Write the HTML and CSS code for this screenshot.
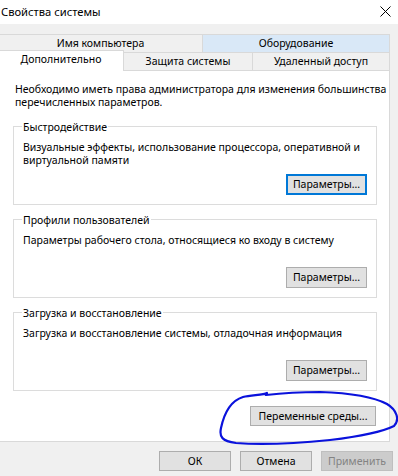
FILE: index.html
```html
<!DOCTYPE html>
<html lang="ru">
<head>
<meta charset="utf-8">
<title>Свойства системы</title>
<link rel="stylesheet" href="styles.css">
</head>
<body>
<div class="window">
  <div class="titlebar">
    <span class="title">Свойства системы</span>
    <svg class="close" width="11" height="11" viewBox="0 0 11 11"><path d="M0.5 0.5 L10.5 10.5 M10.5 0.5 L0.5 10.5" stroke="#000" stroke-width="1" fill="none"/></svg>
  </div>
  <div class="tabctl">
    <div class="tabrow row1">
      <div class="tab t-name">Имя компьютера</div>
      <div class="tab t-hw hover">Оборудование</div>
    </div>
    <div class="tabrow row2">
      <div class="tab t-adv active">Дополнительно</div>
      <div class="tab t-prot">Защита системы</div>
      <div class="tab t-remote">Удаленный доступ</div>
    </div>
  </div>
  <div class="panel">
    <p class="intro">Необходимо иметь права администратора для изменения большинства перечисленных параметров.</p>
    <div class="groups">
      <div class="group">
        <span class="group-title">Быстродействие</span>
        <p class="group-text">Визуальные эффекты, использование процессора, оперативной и виртуальной памяти</p>
        <button class="btn btn-params focused">Параметры...</button>
      </div>
      <div class="group">
        <span class="group-title">Профили пользователей</span>
        <p class="group-text">Параметры рабочего стола, относящиеся ко входу в систему</p>
        <button class="btn btn-params">Параметры...</button>
      </div>
      <div class="group">
        <span class="group-title">Загрузка и восстановление</span>
        <p class="group-text">Загрузка и восстановление системы, отладочная информация</p>
        <button class="btn btn-params">Параметры...</button>
      </div>
      <button class="btn btn-env">Переменные среды...</button>
    </div>
  </div>
  <div class="footer">
    <button class="btn btn-dlg">ОК</button>
    <button class="btn btn-dlg">Отмена</button>
    <button class="btn btn-dlg disabled">Применить</button>
  </div>
  <svg class="scribble" width="398" height="476" viewBox="0 0 398 476"><path d="M267,393 C264,395 252,395 243,397 C230,401 224,414 221,428 C219,437 222,441 236,443 C262,445 300,443 330,440 C355,437 380,433 394,426 C400,420 397,410 387,404 C372,396 350,393 320,392 C300,392 283,393 266,395" stroke="#0a12dc" stroke-width="2.2" fill="none" stroke-linecap="round"/></svg>
</div>
</body>
</html>
```

FILE: styles.css
```css
* { box-sizing: border-box; }
html, body { margin: 0; padding: 0; }
body {
  width: 398px;
  height: 476px;
  overflow: hidden;
  background: #f0f0f0;
  font-family: "Noto Sans", "Open Sans", sans-serif;
  font-size: 10.5px;
  color: #000;
}
.window { position: relative; width: 398px; height: 476px; }
.titlebar {
  height: 24px;
  background: #fff;
  display: flex;
  align-items: center;
  justify-content: space-between;
  padding: 0 7px 0 1px;
}
.title { font-size: 11.2px; line-height: 14px; }
.close { display: block; margin-top: -1px; }
.tabctl { margin: 10px 0 0 -2px; width: 392px; }
.tabrow { display: flex; height: 18px; align-items: flex-start; }
.tab {
  height: 18px;
  background: #f0f0f0;
  border: 1px solid #d9d9d9;
  border-bottom: none;
  border-left: none;
  text-align: center;
  line-height: 16px;
  white-space: nowrap;
}
.tab:first-child { border-left: 1px solid #d9d9d9; }
.t-name { width: 205px; }
.t-hw { width: 187px; }
.t-adv { width: 126px; }
.t-prot { width: 129px; }
.t-remote { width: 137px; }
.hover { background: #d9e8f7; }
.tab.active {
  position: relative;
  z-index: 1;
  background: #fff;
  height: 21px;
  margin-top: -2px;
  border-right: 1px solid #d9d9d9;
  line-height: 17px;
}
.panel {
  margin-left: -2px;
  width: 392px;
  height: 372px;
  background: #fff;
  border: 1px solid #d9d9d9;
  padding: 12px 0 0 14px;
}
.intro { margin: 0 0 0 2px; line-height: 13px; width: 372px; }
.groups {
  width: 364px;
  margin-top: 17px;
  display: flex;
  flex-direction: column;
}
.group {
  height: 79px;
  border: 1px solid #dcdcdc;
  padding: 0 9px 9px 9px;
  display: flex;
  flex-direction: column;
}
.group + .group { margin-top: 14px; }
.group-title {
  align-self: flex-start;
  margin: -6px 0 0 -1px;
  padding: 0 1px;
  background: #fff;
  line-height: 13px;
}
.group-text { margin: 7px 0 0 0; line-height: 13px; }
.btn {
  font-family: inherit;
  font-size: 10.5px;
  color: #000;
  background: #e1e1e1;
  border: 1px solid #adadad;
  height: 21px;
  padding: 0;
  margin: 0;
  line-height: 17px;
}
.btn-params { width: 81px; align-self: flex-end; margin-top: auto; }
.focused { border: 2px solid #0078d7; }
.btn-env { width: 126px; align-self: flex-end; margin: 15px 1px 0 0; height: 20px; }
.footer {
  display: flex;
  justify-content: flex-end;
  gap: 9px;
  padding: 9px 5px 0 0;
}
.btn-dlg { width: 72px; height: 20px; }
.disabled { background: #cccccc; border-color: #bfbfbf; color: #838383; }
.scribble { position: absolute; left: 0; top: 0; pointer-events: none; }
```
